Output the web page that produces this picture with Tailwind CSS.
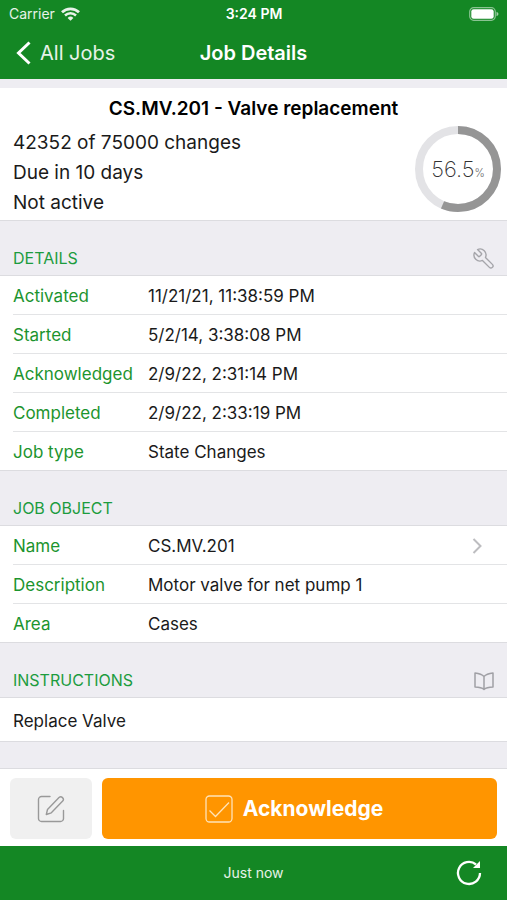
<!DOCTYPE html>
<html lang="en">
<head>
<meta charset="utf-8">
<meta name="viewport" content="width=device-width, initial-scale=1">
<title>Job Details</title>
<script src="https://cdn.jsdelivr.net/npm/@tailwindcss/browser@4"></script>
</head>
<body class="flex min-h-screen flex-col bg-[#eeedf2] font-['Inter','Liberation_Sans',sans-serif] text-base text-[#1a1a1a]">

<header class="bg-[#148724] text-white">
  <div class="grid h-7 grid-cols-3 items-center pr-2 pl-[9px] text-sm leading-7">
    <div class="flex items-center gap-1.5 text-white/90">
      <span>Carrier</span>
      <svg class="h-[14px] w-[19px]" viewBox="0 0 19 14" fill="none" stroke="currentColor" aria-label="Wi-Fi">
        <path d="M1 5.200a12.300 12.300 0 0 1 17 0" stroke-width="2.800"/>
        <path d="M4 8.500a8 8 0 0 1 11 0" stroke-width="2.500"/>
        <path d="M9.500 13.800 6.600 10.900a4.200 4.200 0 0 1 5.800 0z" fill="currentColor" stroke="none"/>
      </svg>
    </div>
    <span class="text-center font-semibold">3:24 PM</span>
    <svg class="h-[14px] w-[30px] justify-self-end" viewBox="0 0 30 14" fill="none" aria-label="Battery full">
      <rect x=".7" y=".7" width="25.600" height="12.600" rx="4" stroke="#fff" stroke-opacity=".5" stroke-width="1.200"/>
      <rect x="2.300" y="2.300" width="22.400" height="9.400" rx="2.300" fill="#fff"/>
      <path d="M27.500 4.800v4.400q2-.7 2-2.200t-2-2.200z" fill="#fff" fill-opacity=".6"/>
    </svg>
  </div>
  <nav class="grid h-[51px] grid-cols-3 items-center px-4 pb-0.5 text-xl">
    <a href="#jobs" class="flex items-center gap-[9px] text-white/90">
      <svg class="h-6 w-[15px]" viewBox="0 0 15 24" fill="none" stroke="#fff" stroke-width="3" aria-hidden="true"><path d="M13.500 1.500 2.500 12l11 10.500"/></svg>
      All Jobs
    </a>
    <h1 class="text-center font-semibold whitespace-nowrap">Job Details</h1>
  </nav>
</header>

<main class="flex-1">
  <section class="mt-[9px] border-b border-[#dcdce0] bg-white px-[13px] pt-[7px] pb-0.5">
    <h2 class="text-center text-[19px] leading-7 font-semibold text-black">CS.MV.201 - Valve replacement</h2>
    <div class="flex items-start justify-between">
      <div class="pt-[5px] text-[19px] leading-[30px]">
        <p>42352 of 75000 changes</p>
        <p>Due in 10 days</p>
        <p>Not active</p>
      </div>
      <div class="relative mt-0.5 -mr-2 size-[88px]">
        <svg class="size-full" viewBox="0 0 88 88" fill="none" stroke-width="8" role="img" aria-label="Job progress">
          <circle cx="44" cy="44" r="39" stroke="#e3e3e6"/>
          <circle cx="44" cy="44" r="39" stroke="#959595" pathLength="100" stroke-dasharray="56.5 100" transform="rotate(-90 44 44)"/>
        </svg>
        <p class="absolute inset-0 flex items-baseline justify-center text-[22px] leading-[88px] font-extralight text-[#333]">56.5<span class="text-[11px] font-light text-[#666]">%</span></p>
      </div>
    </div>
  </section>

  <section>
    <div class="flex h-[54px] items-end justify-between pr-[11px] pb-1 pl-[13px]">
      <h3 class="text-base leading-[26px] text-[#1c9c3e]">DETAILS</h3>
      <button type="button" aria-label="Settings" class="text-[#a5a5aa]">
        <svg class="size-6" viewBox="0 0 24 24" fill="none" stroke="currentColor" stroke-width="1.400" stroke-linejoin="round" stroke-linecap="round" aria-hidden="true">
          <path transform="translate(24 0) scale(-1 1)" d="M14.700 6.300a1 1 0 0 0 0 1.400l1.600 1.600a1 1 0 0 0 1.400 0l3.770-3.770a6 6 0 0 1-7.940 7.940l-6.910 6.910a2.120 2.120 0 0 1-3-3l6.910-6.910a6 6 0 0 1 7.940-7.940l-3.760 3.760z"/>
        </svg>
      </button>
    </div>
    <dl class="border-y border-[#dcdce0] bg-white pl-[13px] text-[17px] leading-9">
      <div class="flex border-b border-[#e3e4e6] pt-0.5"><dt class="w-[135px] text-[#1c942e]">Activated</dt><dd>11/21/21, 11:38:59 PM</dd></div>
      <div class="flex border-b border-[#e3e4e6] pt-0.5"><dt class="w-[135px] text-[#1c942e]">Started</dt><dd>5/2/14, 3:38:08 PM</dd></div>
      <div class="flex border-b border-[#e3e4e6] pt-0.5"><dt class="w-[135px] text-[#1c942e]">Acknowledged</dt><dd>2/9/22, 2:31:14 PM</dd></div>
      <div class="flex border-b border-[#e3e4e6] pt-0.5"><dt class="w-[135px] text-[#1c942e]">Completed</dt><dd>2/9/22, 2:33:19 PM</dd></div>
      <div class="flex pt-0.5"><dt class="w-[135px] text-[#1c942e]">Job type</dt><dd>State Changes</dd></div>
    </dl>
  </section>

  <section>
    <div class="flex h-[54px] items-end justify-between pr-[11px] pb-1 pl-[13px]">
      <h3 class="text-base leading-[26px] text-[#1c9c3e]">JOB OBJECT</h3>
    </div>
    <dl class="border-y border-[#dcdce0] bg-white pl-[13px] text-[17px] leading-9">
      <div class="flex border-b border-[#e3e4e6] pt-0.5"><dt class="w-[135px] text-[#1c942e]">Name</dt>
        <dd class="flex-1"><a href="#object" class="flex items-center justify-between pr-[25px]">CS.MV.201
          <svg class="h-4 w-[10px]" viewBox="0 0 10 16" fill="none" stroke="#bdbdc0" stroke-width="2" aria-hidden="true"><path d="m1.500 1 7 7-7 7"/></svg>
        </a></dd></div>
      <div class="flex border-b border-[#e3e4e6] pt-0.5"><dt class="w-[135px] text-[#1c942e]">Description</dt><dd>Motor valve for net pump 1</dd></div>
      <div class="flex pt-0.5"><dt class="w-[135px] text-[#1c942e]">Area</dt><dd>Cases</dd></div>
    </dl>
  </section>

  <section>
    <div class="flex h-[54px] items-end justify-between pr-[11px] pb-1 pl-[13px]">
      <h3 class="text-base leading-[26px] text-[#1c9c3e]">INSTRUCTIONS</h3>
      <button type="button" aria-label="Open instructions" class="text-[#a0a0a5]">
        <svg class="size-6" viewBox="0 0 24 24" fill="none" stroke="currentColor" stroke-width="1.500" stroke-linejoin="round" aria-hidden="true">
          <path d="M12 7.500Q9.500 4.800 3 4v14q6.500.2 9 2.500 2.500-2.300 9-2.500V4Q14.500 4.800 12 7.500zV20"/>
        </svg>
      </button>
    </div>
    <p class="border-y border-[#dcdce0] bg-white px-[13px] pt-[3px] text-[17px] leading-10">Replace Valve</p>
  </section>
  <div class="h-[26px]"></div>
</main>

<div class="flex gap-[10px] border-t border-[#dcdce0] bg-white px-[10px] pt-[9px] pb-[7px]">
  <button type="button" aria-label="Edit note" class="flex h-[61px] w-[82px] items-center justify-center rounded-md bg-[#f0f0f0] text-[#999]">
    <svg class="size-7" viewBox="0 0 28 28" fill="none" stroke="currentColor" stroke-width="1.400" stroke-linejoin="round" stroke-linecap="round" aria-hidden="true">
      <path d="M13 1.500H4.500a3 3 0 0 0-3 3v19a3 3 0 0 0 3 3h19a3 3 0 0 0 3-3V15.500"/>
      <path d="M9.300 19.500 10.500 14.500 22 2.600c2.300-2.200 5.800 1.100 3.700 3.500L14.300 17.800z"/>
    </svg>
  </button>
  <button type="button" class="flex h-[61px] flex-1 items-center justify-center gap-[10px] rounded-md bg-[#ff9500] pr-[11px] text-[21px] font-bold text-white">
    <svg class="size-7" viewBox="0 0 28 28" fill="none" stroke="#ffe3b8" stroke-width="1.300" aria-hidden="true">
      <rect x="1" y="1" width="26" height="26" rx="3.500"/>
      <path d="m4.500 15.500 6 6 13.500-14"/>
    </svg>
    Acknowledge
  </button>
</div>

<footer class="grid h-[54px] grid-cols-3 items-center bg-[#148724] px-6 text-sm text-white/90">
  <span class="col-start-2 text-center">Just now</span>
  <button type="button" aria-label="Refresh" class="justify-self-end">
    <svg class="size-[28px]" viewBox="0 0 28 28" fill="none" stroke="#fff" stroke-width="2.300" aria-hidden="true">
      <path d="M25 14a11 11 0 1 1-4-8.500"/>
      <path d="M25 2v7H18z" fill="#fff" stroke="none"/>
    </svg>
  </button>
</footer>
</body>
</html>
